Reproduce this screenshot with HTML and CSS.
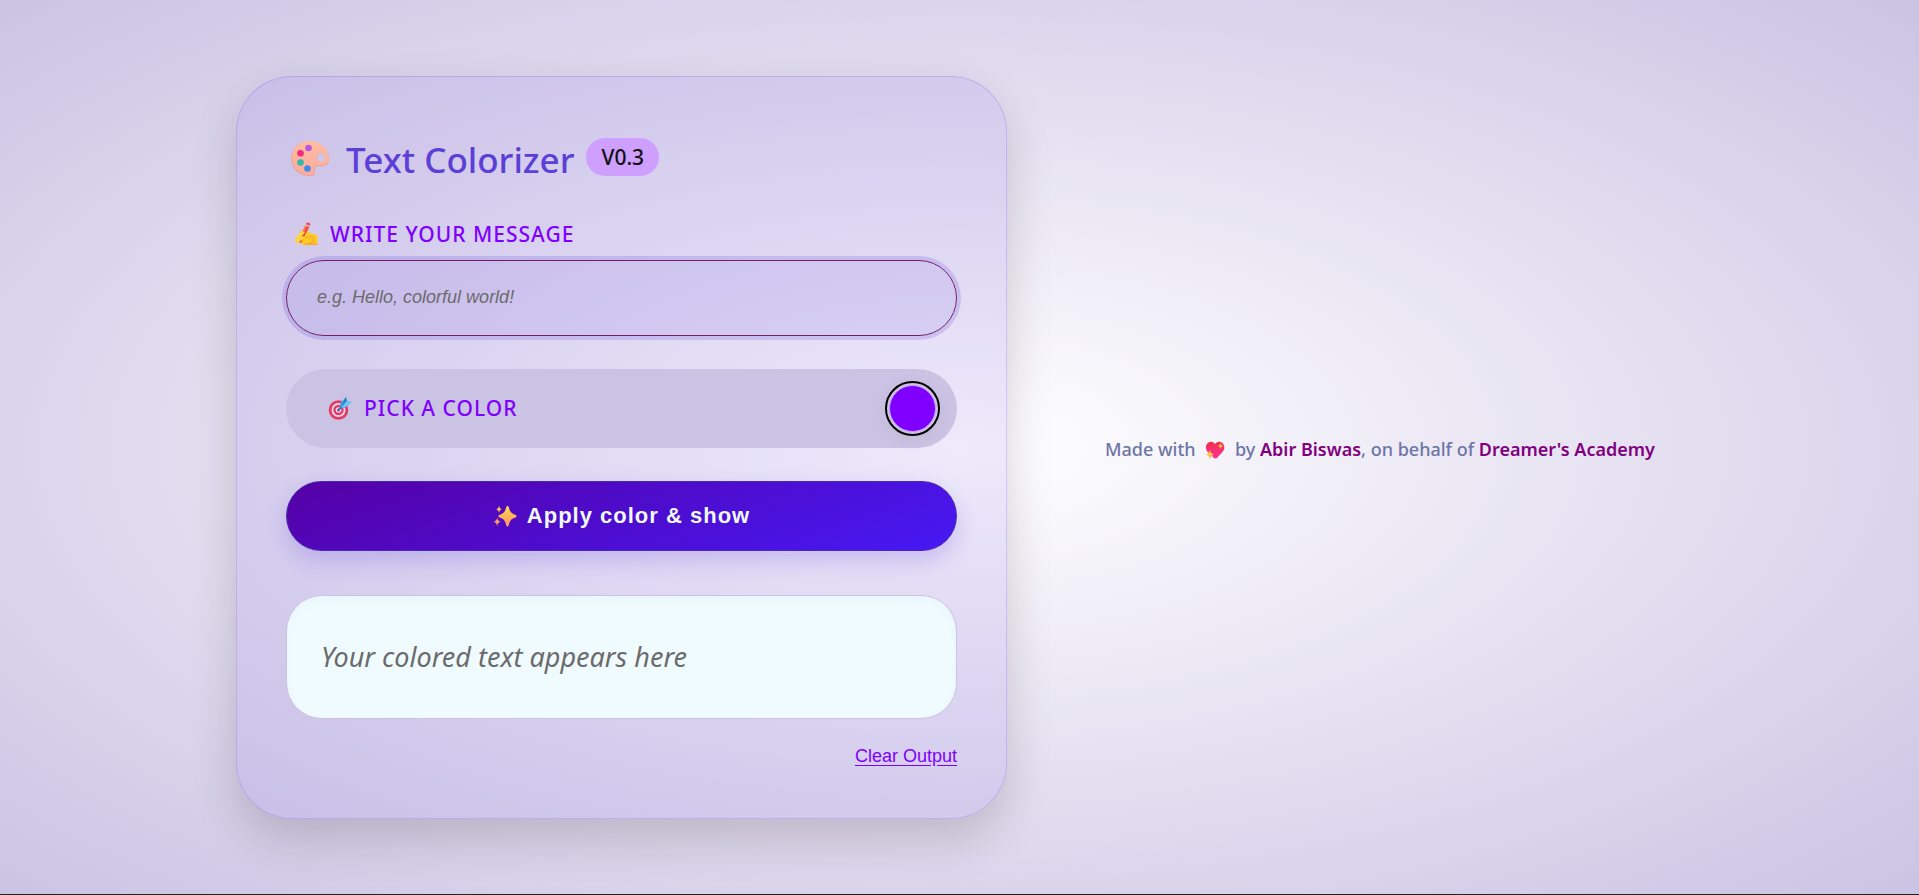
FILE: index.html
```html
<!DOCTYPE html>
<html lang="en">
<head>
<meta charset="UTF-8">
<meta name="viewport" content="width=device-width, initial-scale=1.0">
<title>Text Colorizer</title>
<link rel="stylesheet" href="styles.css">
</head>
<body>
<main class="card">
    <header class="card-header">
        <svg class="icon-title" viewBox="0 0 40 40" aria-hidden="true">
            <defs>
                <linearGradient id="wood" x1="0" y1="0" x2="0" y2="1">
                    <stop offset="0" stop-color="#ffbda0"/>
                    <stop offset="1" stop-color="#fdab9f"/>
                </linearGradient>
            </defs>
            <path fill="#e8a097" fill-rule="evenodd" d="M19 3.500C8.500 3.500 1.200 11 1.200 20.500 1.200 30 9 38.200 19.500 38.200c4.500 0 6.500-2.500 5.500-5.500-.8-2.400.2-4.500 3-4.500h3.500c4.500 0 7.500-2.500 7.500-7.500C39 11 29.500 3.500 19 3.500zm12 12a4.300 4.300 0 1 1 0 8.600 4.300 4.300 0 0 1 0-8.600z"/>
            <path fill="url(#wood)" fill-rule="evenodd" d="M19.500 3C9.500 3 2 10.500 2 19.700 2 29 10 37.300 19.800 37.300c3.700 0 5.200-2 4.400-4.600-.9-3 .6-5.500 3.800-5.500h3.500c4.500 0 7.300-2.300 7.300-7C38.800 10.500 29.500 3 19.500 3zm11.500 12a4.400 4.400 0 1 1 0 8.800 4.400 4.400 0 0 1 0-8.800z"/>
            <circle cx="18.500" cy="10" r="3.300" fill="#bb55e0"/>
            <circle cx="10.500" cy="15.300" r="3.300" fill="#f02c82"/>
            <circle cx="10.500" cy="24.500" r="3.300" fill="#35b8a8"/>
            <circle cx="17.500" cy="30.500" r="3.300" fill="#3a8eea"/>
        </svg>
        <h1>Text Colorizer</h1>
        <span class="badge">V0.3</span>
    </header>

    <!-- Message -->
    <label class="label" for="message">
        <svg class="icon" viewBox="0 0 24 24" aria-hidden="true">
            <path fill="#ffc928" d="M6 10c2-2.300 5-2.500 7-1.200l2.500 2.200 6 1.500c1.500.4 2 1.500 2 3V23H12c-2.500 0-3.500-.8-5.500-1.500z"/>
            <path fill="#f8ab25" d="M12 17c2.500-2 5.500-2.500 7-1 1.300 1.600.3 3.500-2.500 4.200L9 22.500l3 .5h11.500v-1.500H18c3-1.500 3.800-4 2.300-6-2-2.200-6.500-1.700-9 .5z"/>
            <path fill="#fb6a45" d="M11.500 3l3.800 1.700L6.800 21 3.500 19.500z"/>
            <path fill="#e9483c" d="M13.800 4l1.500.7L6.800 21l-1.500-.7z"/>
            <path fill="#e8d8e0" d="M12 2l3.900 1.800-.6 1.200-3.900-1.800z"/>
            <path fill="#f5455f" d="M12.600.8c1-1.100 4 .2 3.600 1.600l-.5 1.500L12 2.200z"/>
            <path fill="#f3c7a5" d="M3.500 19.500L6.800 21 3 23.500z"/>
            <path fill="#ffd23f" d="M1.800 15.500l4.700-5.200c2-1.800 5.500-.8 3.800 1.200L7 14.500c3-1 4.500 1 2.500 2.500L4 20.500c-2 1-3.300-.3-2.300-2z"/>
        </svg>
        WRITE YOUR MESSAGE
    </label>
    <input type="text" id="message" class="message" placeholder="e.g. Hello, colorful world!">

    <!-- Color picker -->
    <div class="picker">
        <label class="label" for="color">
            <svg class="icon" viewBox="0 0 24 24" aria-hidden="true">
                <circle cx="10.500" cy="14" r="9.800" fill="#e23c66"/>
                <circle cx="10.500" cy="14" r="7" fill="#f4dcea"/>
                <circle cx="10.500" cy="14" r="5.200" fill="#e23c66"/>
                <circle cx="10.500" cy="14" r="2.800" fill="#f4dcea"/>
                <circle cx="10.500" cy="14" r="1.500" fill="#c93463"/>
                <path d="M10.500 14L18 6.500" stroke="#2d7fc4" stroke-width="1.800" stroke-linecap="round"/>
                <path fill="#36a6ea" d="M12.500 11.500l-.5-4 6-6.500.6 3.500L23.500 6 17 11.800z"/>
                <path fill="#2478c2" d="M13.500 10.500L18 1l.8 3.800z"/>
                <path fill="#6fc6f5" d="M14 11l5-6.200L23.500 6 17 11.600z"/>
            </svg>
            PICK A COLOR
        </label>
        <input type="color" id="color" class="swatch" value="#8000ff">
    </div>

    <button type="button" class="btn" onclick="applyColor()">
        <svg class="icon" viewBox="0 0 24 24" aria-hidden="true">
            <defs>
                <linearGradient id="spark" x1="0" y1="0" x2="0" y2="1">
                    <stop offset="0" stop-color="#ffd84f"/>
                    <stop offset="1" stop-color="#ff9166"/>
                </linearGradient>
            </defs>
            <path fill="url(#spark)" d="M14.500 2c.8 0 1.100.6 1.400 1.500 1.100 4.200 1.900 5.400 6.300 7.300.8.300 1.300.8 1.300 1.400s-.5 1.100-1.300 1.400c-4.400 1.900-5.200 3.100-6.300 7.400-.3.900-.6 1.500-1.400 1.500s-1.100-.6-1.400-1.500c-1.100-4.300-1.900-5.500-6.300-7.400-.8-.3-1.300-.8-1.300-1.400s.5-1.100 1.300-1.400c4.400-1.900 5.200-3.100 6.300-7.300.3-.9.600-1.500 1.400-1.500z"/>
            <path fill="#ffbd58" d="M6 1.500c.5 2.500 1 3 3 3.800-2 .8-2.500 1.400-3 3.700-.5-2.300-1-2.900-3-3.700 2-.8 2.500-1.300 3-3.800z"/>
            <path fill="#ff9a62" d="M4.200 13.500c.6 2.800 1.200 3.400 3.600 4.300-2.400.9-3 1.500-3.600 4.400-.6-2.900-1.200-3.500-3.600-4.400 2.400-.9 3-1.500 3.600-4.300z"/>
        </svg>
        Apply color &amp; show
    </button>

    <output class="result" id="result" for="message color"><em class="empty">Your colored text appears here</em></output>

    <button type="button" class="clear" onclick="clearOutput()">Clear Output</button>
</main>

<footer class="footer">
    Made with
    <svg class="heart" viewBox="0 0 22 20" aria-hidden="true">
        <defs>
            <linearGradient id="love" x1="0" y1="0" x2="0" y2="1">
                <stop offset="0" stop-color="#ee3344"/>
                <stop offset="1" stop-color="#ff33a0"/>
            </linearGradient>
        </defs>
        <path fill="url(#love)" d="M11 4C9 1.500 6 1.200 3.800 3 1.300 5.300 1.300 9 3.500 11.700L10 18c1 .8 2 .7 3 0l5.700-6.300c2.300-2.900 2.200-6.500-.3-8.700C16.200 1.200 13 1.500 11 4z"/>
        <path fill="#ffc04d" d="M6 10c.8 2.800 1.500 3.500 4 4.600-2.500 1-3.200 1.800-4 4.900-.8-3.100-1.500-3.900-4-4.900 2.500-1.100 3.200-1.800 4-4.600zM16.500 3c.5 2 1 2.300 2.600 3-1.600.7-2.100 1.200-2.600 3-.5-1.800-1-2.300-2.600-3 1.600-.7 2.100-1 2.600-3z"/>
    </svg>
    by <strong>Abir Biswas</strong>, on behalf of <strong>Dreamer's Academy</strong>
</footer>

<script>
var result = document.getElementById('result');
var emptyText = result.innerHTML;

function applyColor() {
    var text = document.getElementById('message').value;
    if (!text) {
        clearOutput();
        return;
    }
    result.textContent = text;
    result.style.color = document.getElementById('color').value;
}

function clearOutput() {
    result.innerHTML = emptyText;
    result.style.color = '';
}
</script>
</body>
</html>
```
FILE: styles.css
```css
* {
    box-sizing: border-box;
}
body {
    font-family: 'Noto Sans', sans-serif;
    background: radial-gradient(#ffffff, #cbc3e3) no-repeat;
    border-bottom: 1px solid #222;
    min-height: 100vh;
    margin: 0;
    display: flex;
    align-items: center;
    justify-content: center;
    gap: 70px;
}
.card {
    width: 100%;
    max-width: 771px;
    padding: 61px 49px 50px;
    display: flex;
    flex-direction: column;
    background: rgba(90, 50, 220, 0.1);
    border: 1px solid rgba(100, 60, 240, 0.2);
    border-radius: 56px;
    box-shadow: 0 20px 45px rgba(40, 20, 20, 0.18);
}
.card-header {
    display: flex;
    align-items: flex-start;
    gap: 12px;
    margin-bottom: 38px;
    padding-left: 4px;
}
.icon-title {
    width: 40px;
    height: 40px;
    margin-right: 4px;
}
h1 {
    margin: 0;
    font-size: 35px;
    font-weight: 500;
    line-height: 44px;
    color: #5b3fd6;
}
.badge {
    padding: 0 15px;
    border-radius: 19px;
    background: #ce9fff;
    color: #111;
    font-size: 21px;
    font-weight: 500;
    line-height: 38px;
}
.label {
    display: flex;
    align-items: center;
    gap: 12px;
    padding-left: 8px;
    font-size: 21px;
    font-weight: 500;
    line-height: 28px;
    letter-spacing: 1px;
    color: #8000ff;
}
.icon {
    width: 24px;
    height: 24px;
}
.message {
    width: 100%;
    height: 76px;
    margin: 12px 0 33px;
    padding: 0 30px;
    border: 1px solid #702063;
    border-radius: 38px;
    outline: none;
    background: rgba(90, 50, 220, 0.1);
    box-shadow: 0 0 0 4px rgba(90, 50, 220, 0.18);
    font-family: 'Liberation Sans', sans-serif;
    font-size: 18px;
    color: #333;
}
.message::placeholder {
    color: #6b6b6b;
    font-style: italic;
}
.picker {
    display: flex;
    align-items: center;
    justify-content: space-between;
    padding: 12px 17px 12px 34px;
    margin-bottom: 33px;
    border-radius: 40px;
    background: #cbc3e3;
}
.swatch {
    appearance: none;
    width: 55px;
    height: 55px;
    padding: 2px;
    border: 2px solid #000;
    border-radius: 50%;
    background: #cbc3e3;
    box-shadow: 0 4px 16px rgba(90, 50, 90, 0.06);
    cursor: pointer;
}
.swatch::-webkit-color-swatch-wrapper {
    padding: 0;
}
.swatch::-webkit-color-swatch {
    border: 1px solid #c9a0f5;
    border-radius: 50%;
}
.btn {
    display: flex;
    align-items: center;
    justify-content: center;
    gap: 10px;
    height: 70px;
    margin-bottom: 44px;
    border: 1px solid #4b2aa8;
    border-radius: 35px;
    background: linear-gradient(160deg, #5500a5, #4619f5);
    box-shadow: 0 10px 22px rgba(80, 40, 220, 0.2);
    color: #f0f8ff;
    font-family: 'Liberation Sans', sans-serif;
    font-size: 22px;
    font-weight: bold;
    letter-spacing: 1px;
    cursor: pointer;
}
.result {
    display: flex;
    align-items: center;
    min-height: 124px;
    padding: 24px 34px;
    margin-bottom: 25px;
    border: 1px solid #cbc3e3;
    border-radius: 36px;
    background: #f0fbff;
    box-shadow: inset 0 4px 10px rgba(0, 100, 160, 0.03);
    font-size: 27px;
}
.empty {
    color: #6b6b6b;
}
.clear {
    align-self: flex-end;
    padding: 0;
    border: none;
    background: none;
    color: #8000ff;
    font-family: 'Liberation Sans', sans-serif;
    font-size: 18px;
    line-height: 24px;
    text-decoration: underline;
    text-underline-offset: 3px;
    cursor: pointer;
}
.footer {
    padding: 4px 28px 0;
    font-size: 18px;
    font-weight: 500;
    color: #6c75a8;
}
.footer strong {
    font-weight: 600;
    color: #800080;
}
.heart {
    width: 22px;
    height: 20px;
    margin: 0 4px;
    vertical-align: -4px;
}
```
